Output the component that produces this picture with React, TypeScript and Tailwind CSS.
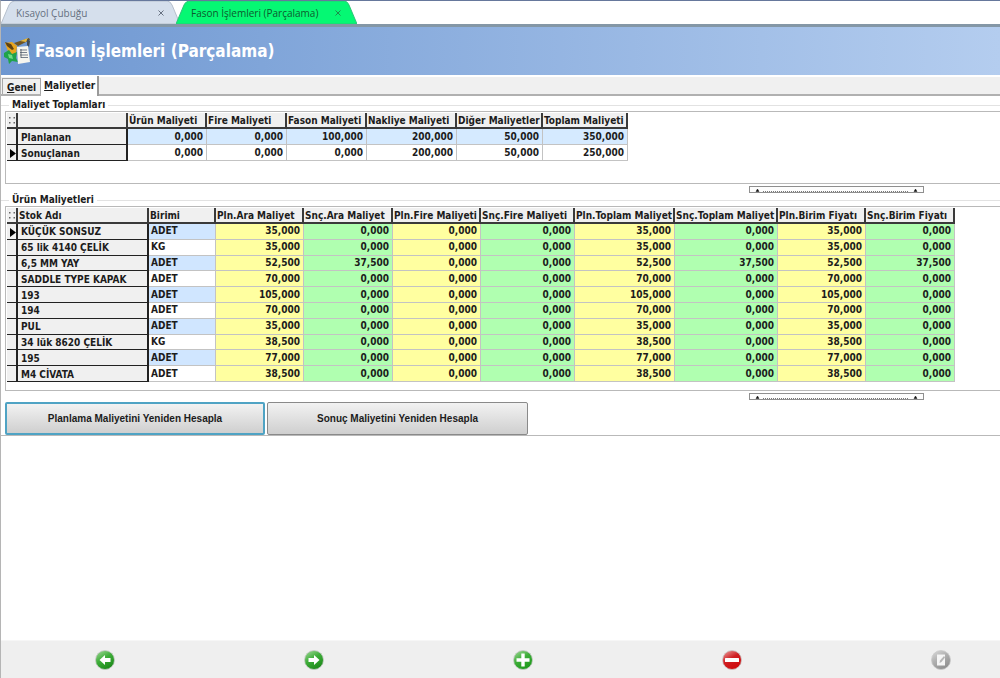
import * as React from "react";
import clsx from "clsx";

type Tone = "plain" | "yellow" | "green";

type Column = {
  label: string;
  width: string;
  tone: Tone;
};

const totalColumns: Column[] = [
  { label: "Ürün Maliyeti", width: "w-[79px]", tone: "plain" },
  { label: "Fire Maliyeti", width: "w-[80px]", tone: "plain" },
  { label: "Fason Maliyeti", width: "w-[80px]", tone: "plain" },
  { label: "Nakliye Maliyeti", width: "w-[90px]", tone: "plain" },
  { label: "Diğer Maliyetler", width: "w-[86px]", tone: "plain" },
  { label: "Toplam Maliyeti", width: "w-[85px]", tone: "plain" },
];

const totalRows = [
  { name: "Planlanan", values: ["0,000", "0,000", "100,000", "200,000", "50,000", "350,000"] },
  { name: "Sonuçlanan", values: ["0,000", "0,000", "0,000", "200,000", "50,000", "250,000"] },
];

const productColumns: Column[] = [
  { label: "Pln.Ara Maliyet", width: "w-[88px]", tone: "yellow" },
  { label: "Snç.Ara Maliyet", width: "w-[89px]", tone: "green" },
  { label: "Pln.Fire Maliyeti", width: "w-[88px]", tone: "yellow" },
  { label: "Snç.Fire Maliyeti", width: "w-[94px]", tone: "green" },
  { label: "Pln.Toplam Maliyet", width: "w-[100px]", tone: "yellow" },
  { label: "Snç.Toplam Maliyet", width: "w-[103px]", tone: "green" },
  { label: "Pln.Birim Fiyatı", width: "w-[88px]", tone: "yellow" },
  { label: "Snç.Birim Fiyatı", width: "w-[89px]", tone: "green" },
];

const productRows = [
  { name: "KÜÇÜK SONSUZ", unit: "ADET", planned: "35,000", actual: "0,000" },
  { name: "65 lik 4140 ÇELİK", unit: "KG", planned: "35,000", actual: "0,000" },
  { name: "6,5 MM YAY", unit: "ADET", planned: "52,500", actual: "37,500" },
  { name: "SADDLE TYPE KAPAK", unit: "ADET", planned: "70,000", actual: "0,000" },
  { name: "193", unit: "ADET", planned: "105,000", actual: "0,000" },
  { name: "194", unit: "ADET", planned: "70,000", actual: "0,000" },
  { name: "PUL", unit: "ADET", planned: "35,000", actual: "0,000" },
  { name: "34 lük 8620 ÇELİK", unit: "KG", planned: "38,500", actual: "0,000" },
  { name: "195", unit: "ADET", planned: "77,000", actual: "0,000" },
  { name: "M4 CİVATA", unit: "ADET", planned: "38,500", actual: "0,000" },
];

const toneClass: Record<Tone, string> = {
  plain: "",
  yellow: "bg-[#ffffa0]",
  green: "bg-[#b0ffb0]",
};

const headCell =
  "overflow-hidden whitespace-nowrap border-r-2 border-b-2 border-[#3a3a3a] bg-[#f0f0f0] p-0 pt-[2px] pl-px text-left font-bold";
const nameCell =
  "overflow-hidden whitespace-nowrap border-r-2 border-b border-[#222] bg-[#f0f0f0] p-0 pt-[2px] pl-[3px] text-left font-bold";
const valueCell = "overflow-hidden border-r border-b border-[#c3c3c3] p-0 pr-[3px] text-right";

function productValue(row: (typeof productRows)[number], column: Column) {
  if (column.label.includes("Fire")) return "0,000";
  return column.tone === "yellow" ? row.planned : row.actual;
}

function DocumentTab({ label, active }: { label: string; active?: boolean }) {
  return (
    <div className={clsx("relative h-[23px]", active ? "-ml-1 w-[181px]" : "w-[179px]")}>
      <svg className="absolute inset-0 h-full w-full" viewBox="0 0 180 23" preserveAspectRatio="none" aria-hidden="true">
        <path
          d="M0 23 L8 4 Q10 0 14 0 H167 Q170 0 172 4 L180 23 Z"
          fill={active ? "#05f873" : "#d5dfec"}
          stroke={active ? "#2bc878" : "#b5bfcc"}
          strokeWidth="1"
        />
      </svg>
      <div className="relative flex h-full items-center justify-between pr-3 pl-[15px] font-['Open_Sans',sans-serif] text-[10px]">
        <a href="#" className={active ? "text-[#0d5a2e]" : "text-[#667080]"}>
          {label}
        </a>
        <button
          type="button"
          aria-label={`${label} kapat`}
          className={clsx("pr-1", active ? "text-[#1d8a4b]" : "text-[#667080]")}
        >
          <svg width="6" height="6" viewBox="0 0 6 6" stroke="currentColor" strokeWidth="1">
            <path d="M0.5 0.5 L5.5 5.5 M5.5 0.5 L0.5 5.5" />
          </svg>
        </button>
      </div>
    </div>
  );
}

function ModuleIcon() {
  return (
    <svg width="27" height="28" viewBox="0 0 27 28" aria-hidden="true">
      <path d="M1 6 L8 5 L13 9 L12 17 L5 17 Z" fill="#e9a51d" />
      <path d="M1 5 L7 7 L10 12 L8 13 L3 9 Z" fill="#5d4214" />
      <path d="M10 6 L25 1 L26 3 L14 9 Z" fill="#6d5423" />
      <path d="M16 4 L24 1 L22 5 Z" fill="#e6b942" />
      <path d="M23 2 L26 4 L25 10 L23 8 Z" fill="#3f4c5c" />
      <path d="M0 16 L5 13 L8 17 L13 15 L12 21 L14 25 L8 24 L5 27 L4 22 L0 20 Z" fill="#20a34a" />
      <path d="M4 17 L8 18 L9 22 L5 21 Z" fill="#6fdc83" />
      <path d="M13 10 L24 9 L26 25 L14 27 Z" fill="#f6f5ee" />
      <path d="M16 13 H23 M16 15.5 H23 M16 18 H24 M17 20.5 H24" stroke="#77808c" strokeWidth="1.1" />
      <path d="M17 12 V21" stroke="#4b545e" strokeWidth="0.8" />
    </svg>
  );
}

function Grip() {
  return (
    <svg className="mx-auto" width="7" height="8" viewBox="0 0 7 8" fill="#666" aria-hidden="true">
      <path d="M0 0h1.5v1.5H0z M4.5 0H6v1.5H4.5z M0 5h1.5v1.5H0z M4.5 5H6v1.5H4.5z" />
    </svg>
  );
}

function RowMarker() {
  return (
    <svg className="mx-auto" width="6" height="9" viewBox="0 0 6 9" aria-hidden="true">
      <path d="M0 0 L6 4.5 L0 9 Z" fill="#000" />
    </svg>
  );
}

function Splitter() {
  return (
    <div className="flex h-[15px] justify-end pt-[2px] pr-[76px]">
      <svg width="175" height="7" viewBox="0 0 175 7" aria-hidden="true">
        <rect x="0.5" y="0.5" width="174" height="6" fill="#fdfdfd" stroke="#8f8f8f" />
        <path d="M7 5.5 L8.5 3 L10 5.5 Z M165 5.5 L166.5 3 L168 5.5 Z" fill="#111" stroke="#111" strokeWidth="0.5" />
        <path d="M14 5.5 H160" stroke="#777" strokeDasharray="1 1" />
      </svg>
    </div>
  );
}

function Group({ title, children }: { title: string; children: React.ReactNode }) {
  return (
    <fieldset className="min-w-0 border-t border-[#e2e2e2] pl-1">
      <legend className="ml-1 px-[3px] text-[10px] leading-3">{title}</legend>
      {children}
    </fieldset>
  );
}

function TotalsTable() {
  return (
    <table className="h-12 w-[620px] table-fixed border-separate border-spacing-0">
      <thead>
        <tr className="h-4">
          <th className={clsx(headCell, "w-[11px]")}>
            <Grip />
          </th>
          <th className={clsx(headCell, "w-[110px]")} aria-label="Satır" />
          {totalColumns.map((c) => (
            <th key={c.label} className={clsx(headCell, c.width)}>
              {c.label}
            </th>
          ))}
        </tr>
      </thead>
      <tbody>
        {totalRows.map((row, i) => (
          <tr key={row.name} className={clsx("h-4", i === 0 ? "bg-[#d5eaff]" : "bg-white")}>
            <td className={clsx(nameCell, "pl-0")}>{i === 1 && <RowMarker />}</td>
            <th scope="row" className={nameCell}>
              {row.name}
            </th>
            {row.values.map((value, j) => (
              <td key={j} className={valueCell}>
                {value}
              </td>
            ))}
          </tr>
        ))}
      </tbody>
    </table>
  );
}

function ProductTable() {
  return (
    <table className="h-[174px] w-[948px] table-fixed border-separate border-spacing-0">
      <thead>
        <tr className="h-4">
          <th className={clsx(headCell, "w-[11px]")}>
            <Grip />
          </th>
          <th className={clsx(headCell, "w-[131px]")}>Stok Adı</th>
          <th className={clsx(headCell, "w-[67px]")}>Birimi</th>
          {productColumns.map((c) => (
            <th key={c.label} className={clsx(headCell, c.width)}>
              {c.label}
            </th>
          ))}
        </tr>
      </thead>
      <tbody>
        {productRows.map((row, i) => (
          <tr key={row.name} className={i % 2 === 0 ? "bg-[#d0e6ff]" : "bg-white"}>
            <td className={clsx(nameCell, "pl-0")}>{i === 0 && <RowMarker />}</td>
            <th scope="row" className={nameCell}>
              {row.name}
            </th>
            <td className="border-r border-b border-[#c3c3c3] p-0 pl-[2px]">{row.unit}</td>
            {productColumns.map((c) => (
              <td key={c.label} className={clsx(valueCell, toneClass[c.tone])}>
                {productValue(row, c)}
              </td>
            ))}
          </tr>
        ))}
      </tbody>
    </table>
  );
}

const footerActions = [
  { id: "prev", label: "Önceki", from: "#a9dba0", mid: "#3fae3a", to: "#1d8a1a" },
  { id: "next", label: "Sonraki", from: "#a9dba0", mid: "#3fae3a", to: "#1d8a1a" },
  { id: "add", label: "Ekle", from: "#a9dba0", mid: "#3fae3a", to: "#1d9a1a" },
  { id: "remove", label: "Sil", from: "#eda9a9", mid: "#cf1f22", to: "#d00a0c" },
  { id: "edit", label: "Düzenle", from: "#dcdcdc", mid: "#b0b0b0", to: "#8f8f8f" },
];

function FooterGlyph({ id }: { id: string }) {
  switch (id) {
    case "prev":
      return <path d="M4.5 10 L10 5 V8 H15.5 V12 H10 V15 Z" fill="#fff" />;
    case "next":
      return <path d="M15.5 10 L10 5 V8 H4.5 V12 H10 V15 Z" fill="#fff" />;
    case "add":
      return <path d="M8.3 3.5 H11.7 V8.3 H16.5 V11.7 H11.7 V16.5 H8.3 V11.7 H3.5 V8.3 H8.3 Z" fill="#fff" />;
    case "remove":
      return <rect x="3" y="8" width="14" height="4" rx="0.5" fill="#fff" />;
    default:
      return (
        <>
          <path d="M6 4.5 H14 V15.5 H6 Z" fill="#f5f5f5" />
          <path d="M8.5 13 L9 10.5 L13 6 L14 7.5 L10.5 12 Z" fill="#b5b5b5" />
        </>
      );
  }
}

export default function App() {
  return (
    <div className="flex min-h-screen flex-col border-t border-l border-t-[#66789c] border-l-[#b5b5b5] bg-white font-['DejaVu_Sans_Condensed','DejaVu_Sans',sans-serif] text-[10px] leading-3 font-bold text-[#1c1c1c]">
      <nav className="flex h-[23px] font-normal">
        <DocumentTab label="Kısayol Çubuğu" />
        <DocumentTab label="Fason İşlemleri (Parçalama)" active />
      </nav>

      <header className="flex h-[51px] items-center gap-1 border-t-[3px] border-[#8497a6] bg-linear-to-r from-[#6e97d1] to-[#b4cdef] pl-[3px]">
        <ModuleIcon />
        <h1 className="text-[17px] leading-6 text-white">Fason İşlemleri (Parçalama)</h1>
      </header>

      <div
        className="flex h-[21px] items-end border-t-2 border-b-2 border-t-white border-b-[#b0b0b0] bg-[#f0f0f0]"
        role="tablist"
      >
        <button
          type="button"
          role="tab"
          aria-selected="false"
          className="ml-px h-4 border border-b-0 border-[#a8a8a8] px-1 pt-[2px] text-[10px] leading-3"
        >
          <span className="underline">G</span>enel
        </button>
        <button
          type="button"
          role="tab"
          aria-selected="true"
          className="-mb-[2px] h-5 border-r-2 border-[#9a9a9a] bg-white pr-[2px] pl-[3px] text-[10px] leading-3"
        >
          <span className="underline">M</span>aliyetler
        </button>
      </div>

      <main className="pt-[3px]">
        <Group title="Maliyet Toplamları">
          <div className="h-[73px] border border-r-0 border-[#b9b9b9] pt-px pl-px">
            <TotalsTable />
          </div>
        </Group>
        <Splitter />
        <div className="-mt-[5px]">
          <Group title="Ürün Maliyetleri">
            <div className="h-[185px] border border-r-0 border-[#b9b9b9] pt-px pl-px">
              <ProductTable />
            </div>
          </Group>
        </div>
        <Splitter />
        <div className="-mt-1 flex gap-[2px] border-b border-[#b9b9b9] pl-1">
          <button
            type="button"
            className="h-[33px] w-[260px] rounded-xs border-2 border-[#4fa3c4] bg-linear-to-b from-[#f2f2f2] to-[#cfcfcf] font-['Liberation_Sans',sans-serif] text-[10px]"
          >
            Planlama Maliyetini Yeniden Hesapla
          </button>
          <button
            type="button"
            className="h-[33px] w-[261px] rounded-xs border border-[#8a8a8a] bg-linear-to-b from-[#f2f2f2] to-[#cfcfcf] font-['Liberation_Sans',sans-serif] text-[10px]"
          >
            Sonuç Maliyetini Yeniden Hesapla
          </button>
        </div>
      </main>

      <footer className="mt-auto flex h-[38px] items-center justify-between border-t border-[#f6f6f6] bg-[#efefef] pr-[49px] pl-[94px]">
        {footerActions.map((action) => (
          <button key={action.id} type="button" aria-label={action.label}>
            <svg width="20" height="20" viewBox="0 0 20 20">
              <defs>
                <linearGradient id={`fill-${action.id}`} x1="0" y1="0" x2="0.6" y2="1">
                  <stop offset="0" stopColor={action.from} />
                  <stop offset="0.5" stopColor={action.mid} />
                  <stop offset="1" stopColor={action.to} />
                </linearGradient>
              </defs>
              <circle cx="10" cy="10" r="9.5" fill={`url(#fill-${action.id})`} stroke="#c9c9c9" strokeWidth="0.8" />
              <FooterGlyph id={action.id} />
            </svg>
          </button>
        ))}
      </footer>
    </div>
  );
}
